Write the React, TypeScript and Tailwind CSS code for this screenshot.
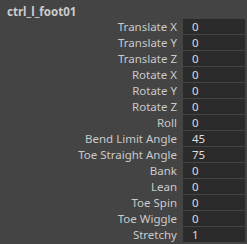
import React from 'react';

interface Attr {
  label: string;
  value: string;
}

const attrs: Attr[] = [
  { label: 'Translate X', value: '0' },
  { label: 'Translate Y', value: '0' },
  { label: 'Translate Z', value: '0' },
  { label: 'Rotate X', value: '0' },
  { label: 'Rotate Y', value: '0' },
  { label: 'Rotate Z', value: '0' },
  { label: 'Roll', value: '0' },
  { label: 'Bend Limit Angle', value: '45' },
  { label: 'Toe Straight Angle', value: '75' },
  { label: 'Bank', value: '0' },
  { label: 'Lean', value: '0' },
  { label: 'Toe Spin', value: '0' },
  { label: 'Toe Wiggle', value: '0' },
  { label: 'Stretchy', value: '1' },
];

export default function App() {
  return (
    <div
      className="w-[247px] h-[244px] bg-[#444444] overflow-hidden"
      style={{ fontFamily: '"Noto Sans", sans-serif' }}
    >
      {/* node name */}
      <div className="pl-[7px] pt-[4px] h-[19px] text-[11.5px] font-bold leading-[15px] text-[#cccccc]">
        ctrl_l_foot01
      </div>

      {/* channel box rows */}
      <div className="flex flex-col gap-px">
        {attrs.map((a) => (
          <div key={a.label} className="flex items-center h-[15px]">
            <div className="w-[178px] pr-px text-right text-[11.5px] leading-[15px] text-[#cacaca] whitespace-nowrap">
              {a.label}
            </div>
            <div className="ml-[5px] w-[62px] h-[15px] bg-[#2b2b2b] pl-[9px] text-[11.5px] leading-[15px] text-[#dedede]">
              {a.value}
            </div>
          </div>
        ))}
      </div>
    </div>
  );
}
